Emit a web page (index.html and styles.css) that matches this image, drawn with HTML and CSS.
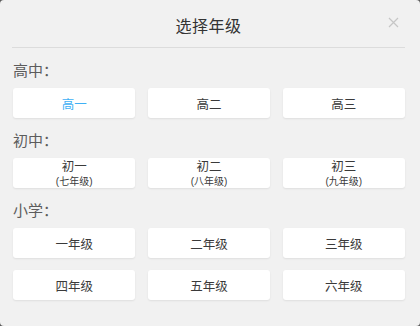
FILE: index.html
```html
<!DOCTYPE html>
<html lang="zh">
<head>
<meta charset="utf-8">
<link rel="stylesheet" href="styles.css">
</head>
<body>
<div class="dialog">
  <div class="header">
    <span class="title">选择年级</span>
    <span class="close">
      <svg width="11" height="11" viewBox="0 0 11 11"><path d="M1 1L10 10M10 1L1 10" stroke="#c6c6c6" stroke-width="1.2" fill="none"/></svg>
    </span>
  </div>
  <div class="body">
    <div class="label">高中：</div>
    <div class="grid">
      <div class="btn active">高一</div>
      <div class="btn">高二</div>
      <div class="btn">高三</div>
    </div>
    <div class="label">初中：</div>
    <div class="grid">
      <div class="btn two"><span class="main">初一</span><span class="sub">(七年级)</span></div>
      <div class="btn two"><span class="main">初二</span><span class="sub">(八年级)</span></div>
      <div class="btn two"><span class="main">初三</span><span class="sub">(九年级)</span></div>
    </div>
    <div class="label">小学：</div>
    <div class="grid">
      <div class="btn">一年级</div>
      <div class="btn">二年级</div>
      <div class="btn">三年级</div>
      <div class="btn">四年级</div>
      <div class="btn">五年级</div>
      <div class="btn">六年级</div>
    </div>
  </div>
</div>
</body>
</html>
```
FILE: styles.css
```css
html, body {
  margin: 0;
  padding: 0;
  background: #5a5a5a;
}
body {
  font-family: "Noto Sans CJK SC", "Noto Sans", sans-serif;
  width: 420px;
  height: 326px;
  overflow: hidden;
}
.dialog {
  width: 420px;
  height: 326px;
  background: #f1f1f1;
  border-radius: 4px;
  box-sizing: border-box;
  padding: 0 15px 0 13px;
}
.header {
  position: relative;
  height: 48px;
  box-sizing: border-box;
  padding-top: 3px;
  display: flex;
  align-items: center;
  justify-content: center;
  border-bottom: 1px solid #dcdcdc;
  margin-left: -1px;
}
.title {
  font-size: 16px;
  color: #333;
  letter-spacing: 0.5px;
}
.close {
  position: absolute;
  right: 6px;
  top: 17px;
  line-height: 0;
}
.label {
  margin-top: 12px;
  font-size: 15px;
  line-height: 20px;
  color: #5c5c5c;
}
.grid {
  margin-top: 8px;
  display: grid;
  grid-template-columns: repeat(3, 1fr);
  column-gap: 12.5px;
  row-gap: 12px;
}
.btn {
  height: 30px;
  background: #fff;
  border-radius: 3px;
  box-shadow: 0 1px 2px rgba(0,0,0,0.08);
  display: flex;
  align-items: center;
  justify-content: center;
  font-size: 12.5px;
  color: #3a3a3a;
}
.btn.active {
  color: #3fb0f5;
}
.btn.two {
  flex-direction: column;
  padding-top: 1px;
  box-sizing: border-box;
  font-family: "Liberation Sans", "Noto Sans CJK SC", sans-serif;
}
.main {
  line-height: 15px;
}
.sub {
  font-size: 10px;
  line-height: 13px;
}
```
